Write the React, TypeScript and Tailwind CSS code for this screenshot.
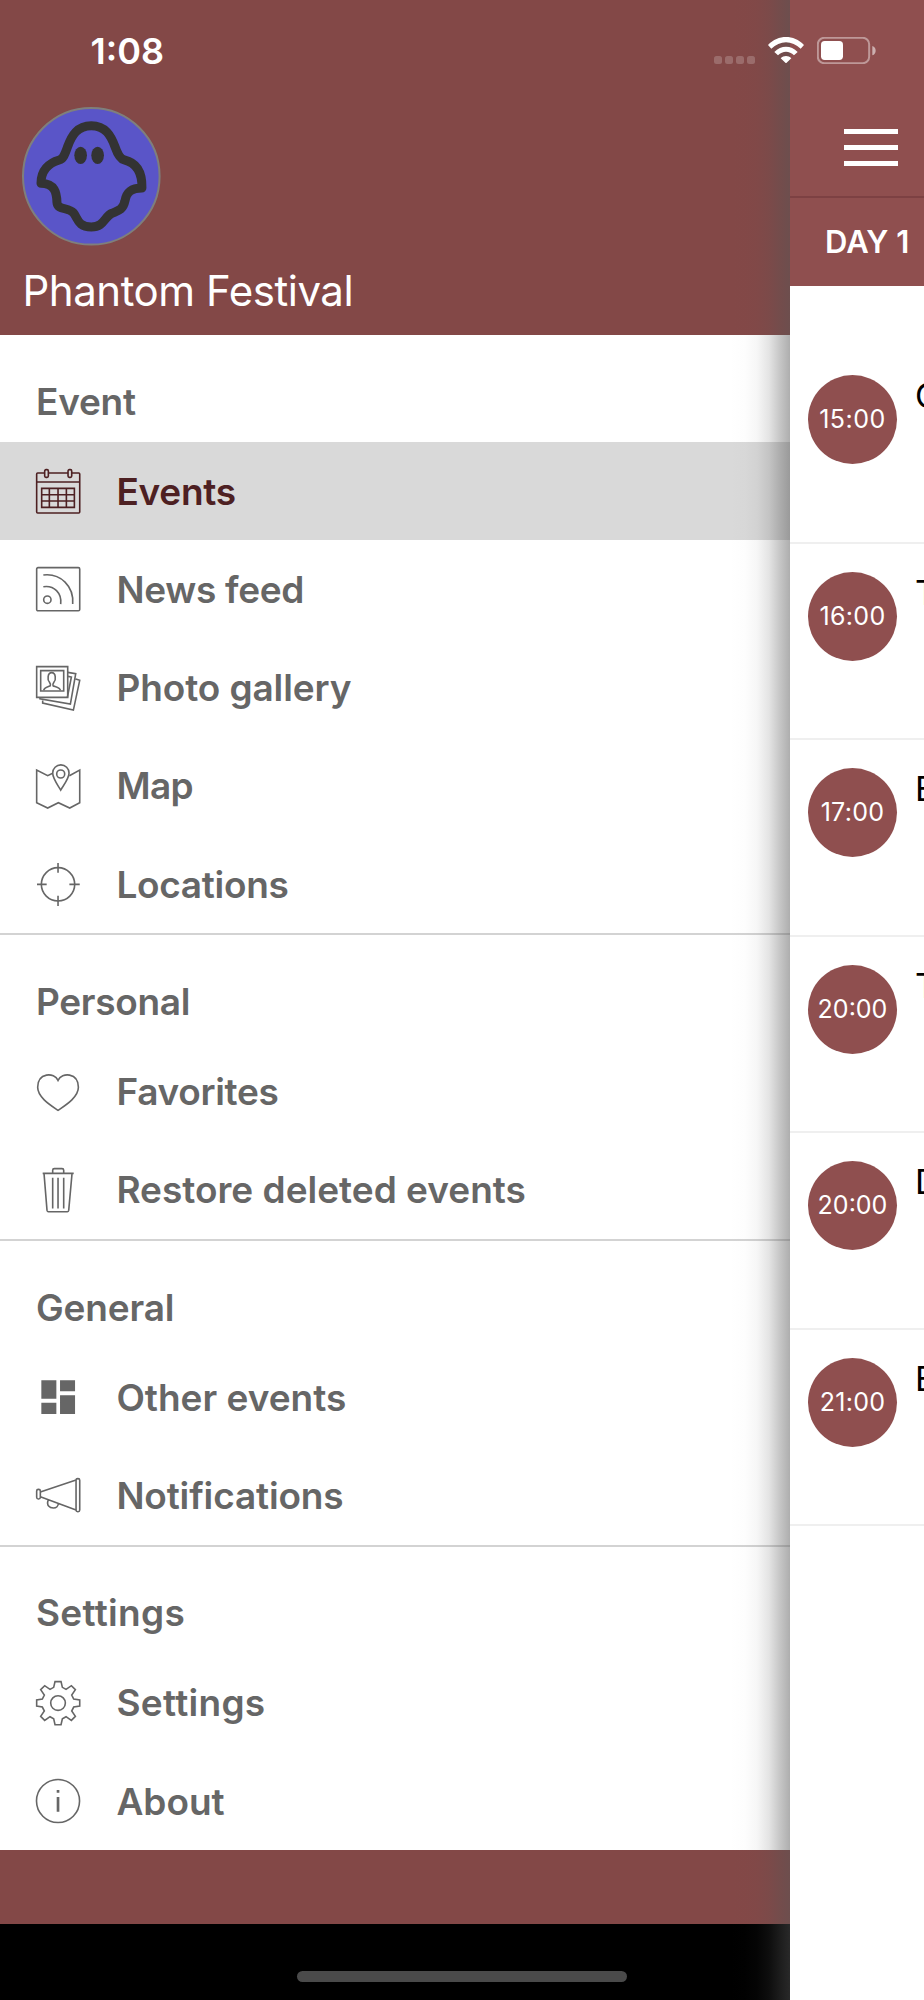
import type { ReactNode } from 'react';

type IconName =
  | 'calendar'
  | 'news'
  | 'gallery'
  | 'map'
  | 'locations'
  | 'heart'
  | 'trash'
  | 'dashboard'
  | 'megaphone'
  | 'gear'
  | 'info';

interface MenuItem {
  label: string;
  icon: IconName;
  spacing: string;
  active?: boolean;
}

interface MenuSection {
  title: string;
  spacing: string;
  items: MenuItem[];
}

const sections: MenuSection[] = [
  {
    title: 'Event',
    spacing: 'tracking-[-0.25px]',
    items: [
      { label: 'Events', icon: 'calendar', spacing: 'tracking-[-0.25px]', active: true },
      { label: 'News feed', icon: 'news', spacing: 'tracking-[-0.3px]' },
      { label: 'Photo gallery', icon: 'gallery', spacing: 'tracking-[-0.1px]' },
      { label: 'Map', icon: 'map', spacing: 'tracking-[-0.6px]' },
      { label: 'Locations', icon: 'locations', spacing: 'tracking-[-0.3px]' },
    ],
  },
  {
    title: 'Personal',
    spacing: 'tracking-[-0.3px]',
    items: [
      { label: 'Favorites', icon: 'heart', spacing: 'tracking-[-0.3px]' },
      { label: 'Restore deleted events', icon: 'trash', spacing: 'tracking-[0px]' },
    ],
  },
  {
    title: 'General',
    spacing: 'tracking-[-0.15px]',
    items: [
      { label: 'Other events', icon: 'dashboard', spacing: 'tracking-[0px]' },
      { label: 'Notifications', icon: 'megaphone', spacing: 'tracking-[-0.15px]' },
    ],
  },
  {
    title: 'Settings',
    spacing: 'tracking-[0.3px]',
    items: [
      { label: 'Settings', icon: 'gear', spacing: 'tracking-[0.3px]' },
      { label: 'About', icon: 'info', spacing: 'tracking-[0px]' },
    ],
  },
];

const schedule = [
  { time: '15:00', title: 'O', spacing: 'tracking-[0.5px]' },
  { time: '16:00', title: 'T', spacing: 'tracking-[0.3px]' },
  { time: '17:00', title: 'B', spacing: 'tracking-[0.3px]' },
  { time: '20:00', title: 'T', spacing: 'tracking-[0px]' },
  { time: '20:00', title: 'D', spacing: 'tracking-[0px]' },
  { time: '21:00', title: 'B', spacing: 'tracking-[0.3px]' },
];

const icons: Record<IconName, ReactNode> = {
  calendar: (
    <>
      <path d="M26 12H5a3 3 0 0 0-3 3v114a3 3 0 0 0 3 3h123a3 3 0 0 0 3-3V15a3 3 0 0 0-3-3h-21M37 12h59M2 39h129" />
      <rect x="26" y="2" width="11" height="23" rx="4" />
      <rect x="96" y="2" width="11" height="23" rx="4" />
      <path d="M17 58h98v57H17zM40 58v57M66 58v57M91 58v57M17 77h98M17 96h98" />
    </>
  ),
  news: (
    <>
      <rect x="2" y="2" width="129" height="129" rx="4" />
      <path d="M22 24C74 18 114 58 110 111M22 59C54 54 78 78 74 111" />
      <circle cx="34" cy="98" r="11" />
    </>
  ),
  gallery: (
    <>
      <path d="M2 2h93v92H2zM14 14h69v61H14z" />
      <path d="M23 73c1-9 15-11 20-14 2-4-1-8-3-11-6-6-6-28 7-28s13 22 7 28c-2 3-5 7-3 11 5 3 21 5 22 14" />
      <path d="M95 19l24 4-16 91-91-16v-4M96 31l10 2-12 61M119 39l12 4-19 89-92-21v-8" />
    </>
  ),
  map: (
    <>
      <path d="M50 28l-15 7L2 18v98l33 16 32-16 34 16 30-16V18l-31 17" />
      <path d="M74 78C66 64 50 44 50 27a24.5 24.5 0 0 1 49 0c0 17-17 37-25 51z" />
      <circle cx="74" cy="30" r="12" />
    </>
  ),
  locations: (
    <>
      <circle cx="66" cy="67" r="50" />
      <path d="M66 3v29M66 101v31M3 67h29M100 67h31" />
    </>
  ),
  heart: <path d="M66 34C55 9 5 10 5 55c0 29 36 52 61 69 25-17 61-40 61-69C127 10 77 9 66 34z" />,
  trash: (
    <>
      <path d="M20 16h93M50 16V7q0-5 5-5h23q5 0 5 5v9M24 16l9 111q1 4 4 4h57q3 0 4-4l10-111" />
      <path d="M50 29v92M66 29v92M83 29v92" />
    </>
  ),
  dashboard: (
    <path d="M16 16h45v55H16zM72 16h45v33H72zM16 83h45v34H16zM72 61h45v56H72z" fill="currentColor" stroke="none" />
  ),
  megaphone: (
    <>
      <rect x="120" y="17" width="11" height="99" rx="5" />
      <rect x="2" y="49" width="11" height="29" rx="5" />
      <path d="M13 57l107-36M13 71l107 40M37 80c-7 17 4 25 15 25 9 0 15-6 15-14" />
    </>
  ),
  gear: (
    <>
      <path d="M57 2h18l4 17 11 6 16-11 12 12-11 16 6 12 18 3v18l-18 3-6 12 11 16-12 12-16-11-11 6-4 18H57l-4-18-11-6-16 11-12-12 11-16-6-12-17-3V57l17-3 6-12-11-16 12-12 16 11 11-6z" />
      <circle cx="66" cy="66" r="22" />
    </>
  ),
  info: (
    <>
      <circle cx="66" cy="66" r="64.5" />
      <path d="M66 54v44M66 33v8" strokeWidth="8" />
    </>
  ),
};

function MenuIcon({ name }: { name: IconName }) {
  return (
    <svg
      viewBox="0 0 133 133"
      className="ml-9 size-[44.4px] shrink-0 overflow-visible"
      fill="none"
      stroke="currentColor"
      strokeWidth="4.8"
    >
      {icons[name]}
    </svg>
  );
}

function GhostLogo() {
  return (
    <svg viewBox="0 0 416 416" className="size-[138.6px]">
      <circle cx="208" cy="208" r="205" fill="#5a55c8" stroke="#7f7f7c" strokeWidth="6" />
      <path
        d="M208 56C250 56 267 86 279 119C287 142 295 156 307 159C345 168 361 196 360 243C330 243 314 253 309 282C303 311 286 312 270 319C248 328 247 360 208 360C167 360 168 334 154 317C138 301 106 309 105 287C104 258 99 230 57 229C57 190 80 168 112 159C124 156 129 141 137 119C149 86 166 56 208 56Z"
        fill="none"
        stroke="#333"
        strokeWidth="27"
        strokeLinejoin="round"
      />
      <ellipse cx="176" cy="145" rx="19" ry="26" fill="#333" />
      <ellipse cx="227" cy="145" rx="19" ry="26" fill="#333" />
    </svg>
  );
}

function StatusBar() {
  return (
    <div className="absolute inset-x-0 top-0 flex h-[100px] text-white">
      <span className="ml-[90.5px] mt-[29px] text-[36px] leading-[44px] font-semibold">1:08</span>
      <div className="absolute left-[714px] top-[56px] flex gap-[3px]">
        {[0, 1, 2, 3].map((dot) => (
          <span key={dot} className="size-2 rounded-[2.5px] bg-white/20" />
        ))}
      </div>
      <svg viewBox="0 0 108 78" className="absolute left-[768px] top-[37px] h-[26px] w-[36px]" fill="#fff">
        <path d="M0 24C31-8 77-8 108 24L98 35C72 9 36 9 10 35zM19 45C39 24 69 24 89 45L78 55C64 41 44 41 30 55zM38 64C47 55 61 55 70 64L54 79z" />
      </svg>
      <svg viewBox="0 0 177 81" className="absolute left-[817px] top-[36.5px] h-[27px] w-[59px]">
        <rect x="2.5" y="2.5" width="154" height="76" rx="19" fill="none" stroke="#fff" strokeOpacity=".42" strokeWidth="6" />
        <rect x="12" y="12" width="66" height="57" rx="11" fill="#fff" />
        <path d="M166 27q10 4 10 14t-10 14z" fill="#fff" fillOpacity=".55" />
      </svg>
    </div>
  );
}

function Drawer() {
  return (
    <aside className="relative flex h-full w-[790px] shrink-0 flex-col bg-black">
      <header className="flex h-[335px] shrink-0 flex-col bg-[#834847] pl-[22.4px] pt-[107px]">
        <GhostLogo />
        <h1 className="mt-[20px] whitespace-nowrap text-[42px] leading-[50px] tracking-[-0.45px] text-white">
          Phantom Festival
        </h1>
      </header>

      <nav className="h-[1515px] shrink-0 overflow-hidden bg-white text-[37px] font-semibold text-[#666]">
        {sections.map((section, index) => (
          <section key={section.title} className={index > 0 ? 'border-t-2 border-[#d3d3d3]' : ''}>
            <h2 className={`h-[107.3px] pl-9 pt-[42.6px] leading-[48px] ${section.spacing}`}>{section.title}</h2>
            {section.items.map((item) => (
              <div
                key={item.label}
                className={`flex h-[98.2px] items-center ${item.active ? 'bg-[#d9d9d9] text-[#4d2022]' : ''}`}
              >
                <MenuIcon name={item.icon} />
                <span className={`ml-9 whitespace-nowrap pt-[0.5px] ${item.spacing}`}>{item.label}</span>
              </div>
            ))}
          </section>
        ))}
      </nav>

      <div className="h-[74px] shrink-0 bg-[#834847]" />

      {/* Shadow cast by the page */}
      <div className="absolute inset-y-0 right-0 w-[60px] bg-[linear-gradient(to_right,rgba(85,85,85,0),rgba(85,85,85,0.01)_25%,rgba(85,85,85,0.05)_45%,rgba(85,85,85,0.16)_65%,rgba(85,85,85,0.34)_84%,rgba(85,85,85,0.48))]" />
    </aside>
  );
}

function SchedulePage() {
  return (
    <main className="h-full w-[134px] shrink-0 overflow-hidden bg-white">
      <div className="h-[286px] bg-[#8f4f4f]">
        <div className="h-[198px] border-b-2 border-[#7d4143] pl-[54px] pt-[128.5px]">
          <div className="flex w-[54px] flex-col gap-[10.5px]">
            <span className="h-[5.5px] bg-white" />
            <span className="h-[5.5px] bg-white" />
            <span className="h-[5.5px] bg-white" />
          </div>
        </div>
        <div className="flex h-[88px] items-center whitespace-nowrap pl-[35px] text-[31px] font-semibold text-white">
          DAY 1
        </div>
      </div>

      <ul className="pt-[61px]">
        {schedule.map((event, index) => (
          <li key={index} className="flex h-[196.5px] gap-[18px] border-b-2 border-[#efefef] pl-[18px] pt-[28px]">
            <span
              className={`flex size-[89px] shrink-0 items-center justify-center rounded-full bg-[#8f4f4f] pt-px text-[25px] text-white ${event.spacing}`}
            >
              {event.time}
            </span>
            <span className="text-[34px] leading-[41px] text-black">{event.title}</span>
          </li>
        ))}
      </ul>
    </main>
  );
}

export default function App() {
  return (
    <div className="relative flex h-[2000px] w-[924px] overflow-hidden font-['Inter',sans-serif]">
      <Drawer />
      <SchedulePage />
      <StatusBar />
      <div className="absolute left-[297px] top-[1971px] h-[11px] w-[330px] rounded-full bg-[#4a4a4a]" />
    </div>
  );
}
